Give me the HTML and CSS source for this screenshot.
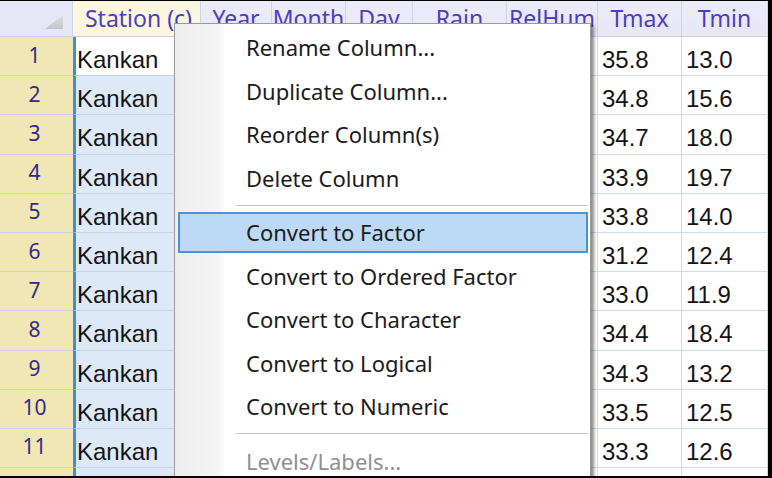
FILE: index.html
```html
<!DOCTYPE html>
<html>
<head>
<meta charset="utf-8">
<link rel="stylesheet" href="styles.css">
</head>
<body>
<div class="screen">
  <div class="grid">
    <div class="corner"><svg class="tri" width="20" height="16" viewBox="0 0 20 16"><defs><linearGradient id="g" x1="0" y1="0" x2="0" y2="1"><stop offset="0" stop-color="#dcdce4"/><stop offset="1" stop-color="#c4c4cc"/></linearGradient></defs><polygon points="1,15 19,15 19,1" fill="url(#g)"/></svg></div>
    <div class="hd sel">Station (c)</div>
    <div class="hd">Year</div>
    <div class="hd">Month</div>
    <div class="hd">Day</div>
    <div class="hd">Rain</div>
    <div class="hd">RelHum</div>
    <div class="hd">Tmax</div>
    <div class="hd">Tmin</div>

    <div class="rn">1</div><div class="st active">Kankan</div><div class="d"></div><div class="d"></div><div class="d"></div><div class="d"></div><div class="d"></div><div class="d">35.8</div><div class="d">13.0</div>
    <div class="rn">2</div><div class="st">Kankan</div><div class="d"></div><div class="d"></div><div class="d"></div><div class="d"></div><div class="d"></div><div class="d">34.8</div><div class="d">15.6</div>
    <div class="rn">3</div><div class="st">Kankan</div><div class="d"></div><div class="d"></div><div class="d"></div><div class="d"></div><div class="d"></div><div class="d">34.7</div><div class="d">18.0</div>
    <div class="rn">4</div><div class="st">Kankan</div><div class="d"></div><div class="d"></div><div class="d"></div><div class="d"></div><div class="d"></div><div class="d">33.9</div><div class="d">19.7</div>
    <div class="rn">5</div><div class="st">Kankan</div><div class="d"></div><div class="d"></div><div class="d"></div><div class="d"></div><div class="d"></div><div class="d">33.8</div><div class="d">14.0</div>
    <div class="rn">6</div><div class="st">Kankan</div><div class="d"></div><div class="d"></div><div class="d"></div><div class="d"></div><div class="d"></div><div class="d">31.2</div><div class="d">12.4</div>
    <div class="rn">7</div><div class="st">Kankan</div><div class="d"></div><div class="d"></div><div class="d"></div><div class="d"></div><div class="d"></div><div class="d">33.0</div><div class="d">11.9</div>
    <div class="rn">8</div><div class="st">Kankan</div><div class="d"></div><div class="d"></div><div class="d"></div><div class="d"></div><div class="d"></div><div class="d">34.4</div><div class="d">18.4</div>
    <div class="rn">9</div><div class="st">Kankan</div><div class="d"></div><div class="d"></div><div class="d"></div><div class="d"></div><div class="d"></div><div class="d">34.3</div><div class="d">13.2</div>
    <div class="rn">10</div><div class="st">Kankan</div><div class="d"></div><div class="d"></div><div class="d"></div><div class="d"></div><div class="d"></div><div class="d">33.5</div><div class="d">12.5</div>
    <div class="rn">11</div><div class="st">Kankan</div><div class="d"></div><div class="d"></div><div class="d"></div><div class="d"></div><div class="d"></div><div class="d">33.3</div><div class="d">12.6</div>
    <div class="rn"></div><div class="st"></div><div class="d"></div><div class="d"></div><div class="d"></div><div class="d"></div><div class="d"></div><div class="d"></div><div class="d"></div>
  </div>

  <div class="menu">
    <div class="item">Rename Column...</div>
    <div class="item">Duplicate Column...</div>
    <div class="item">Reorder Column(s)</div>
    <div class="item">Delete Column</div>
    <div class="sep"></div>
    <div class="item hot">Convert to Factor</div>
    <div class="item">Convert to Ordered Factor</div>
    <div class="item">Convert to Character</div>
    <div class="item">Convert to Logical</div>
    <div class="item">Convert to Numeric</div>
    <div class="sep"></div>
    <div class="item dis">Levels/Labels...</div>
  </div>
</div>
</body>
</html>
```

FILE: styles.css
```css
* { box-sizing: border-box; margin: 0; padding: 0; }
html, body { margin: 0; background: #000; }
body { width: 772px; height: 478px; overflow: hidden; }

.screen {
  position: relative;
  width: 772px;
  height: 478px;
  border-top: 1px solid #000;
  border-right: 4px solid #000;
  border-bottom: 2px solid #000;
  background: #fff;
  overflow: hidden;
}

.grid {
  display: grid;
  grid-template-columns: 73px 128px 71px 74px 67px 94px 91px 84px 86px;
  grid-template-rows: 36px repeat(12, 39.2px);
}

.corner {
  background: #e6e6f6;
  border-right: 1px solid #cdd2e6;
  border-bottom: 1px solid #c9cfe3;
  display: flex;
  justify-content: flex-end;
  align-items: flex-end;
  padding: 0 8px 6px 0;
}
.tri { display: block; }

.hd {
  background: linear-gradient(#ececf9, #e6e6f5);
  border-right: 1px solid #cdd2e6;
  border-bottom: 1px solid #c9cfe3;
  color: #4c3dc2;
  font-family: "Noto Sans", "Open Sans", sans-serif;
  font-size: 23px;
  display: flex;
  justify-content: center;
  align-items: center;
  padding-bottom: 2px;
  white-space: nowrap;
  overflow: hidden;
}
.hd.sel { background: #fbf6de; padding-left: 4px; }

.rn {
  background: #f0e7b5;
  border-bottom: 1px solid #c9d1e0;
  color: #35288c;
  font-family: "Noto Sans", "Open Sans", sans-serif;
  font-size: 21px;
  display: flex;
  justify-content: center;
  align-items: center;
  padding: 0 4px 3px 0;
}

.st, .d {
  font-family: "Liberation Sans", Arial, sans-serif;
  font-size: 24px;
  line-height: 28px;
  color: #141414;
  padding-top: 9px;
  white-space: nowrap;
  overflow: hidden;
}

.st {
  background: #dde9f8;
  border-left: 3px solid #3d8edb;
  border-right: 1px solid #c7d3e6;
  border-bottom: 1px solid #c7d3e6;
  padding-left: 1px;
}
.st.active { background: #fff; }

.d {
  background: #fff;
  border-right: 1px solid #d3dbea;
  border-bottom: 1px solid #d3dbea;
  padding-left: 4px;
}

.menu {
  position: absolute;
  left: 174px;
  top: 22px;
  width: 417px;
  height: 480px;
  background: linear-gradient(to right, #ededed 0, #f5f5f5 44px, #fbfbfb 48px, #fff 49px);
  border: 1px solid #9a9a9a;
  box-shadow: 3px 3px 3px rgba(0, 0, 0, 0.45);
  padding: 1.5px 2px 0 3px;
  font-family: "Noto Sans", "Open Sans", sans-serif;
  font-size: 22px;
  color: #1b1b1b;
  display: flex;
  flex-direction: column;
}

.item {
  flex: none;
  height: 41.5px;
  margin: 1px 0;
  padding-left: 66px;
  border: 2px solid transparent;
  display: flex;
  align-items: center;
  white-space: nowrap;
}
.item.hot {
  background: #bcdaf5;
  border-color: #4793df;
}
.item.dis { color: #8f8f8f; }

.sep {
  flex: none;
  height: 11px;
  padding-top: 5px;
}
.sep::before {
  content: "";
  display: block;
  height: 1px;
  margin-left: 58px;
  background: #c3c3c3;
}
```
